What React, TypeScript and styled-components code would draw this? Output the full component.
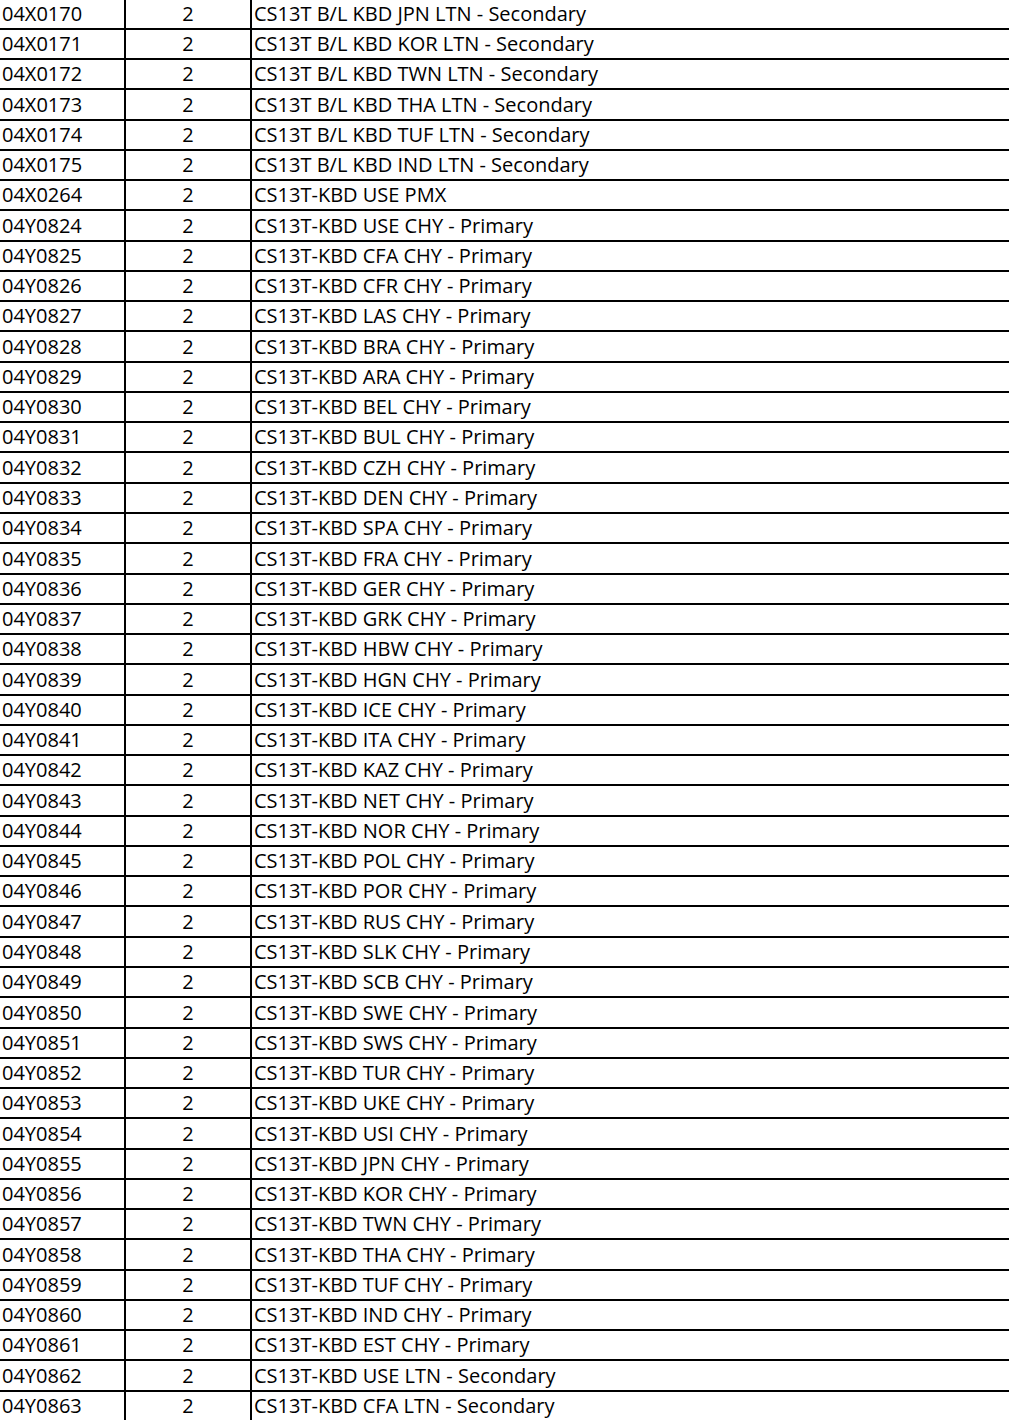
import React from "react";
import styled, { createGlobalStyle } from "styled-components";

const rows: [string, string][] = [
  ["04X0170", "CS13T B/L KBD JPN LTN - Secondary"],
  ["04X0171", "CS13T B/L KBD KOR LTN - Secondary"],
  ["04X0172", "CS13T B/L KBD TWN LTN - Secondary"],
  ["04X0173", "CS13T B/L KBD THA LTN - Secondary"],
  ["04X0174", "CS13T B/L KBD TUF LTN - Secondary"],
  ["04X0175", "CS13T B/L KBD IND LTN - Secondary"],
  ["04X0264", "CS13T-KBD USE PMX"],
  ["04Y0824", "CS13T-KBD USE CHY - Primary"],
  ["04Y0825", "CS13T-KBD CFA CHY - Primary"],
  ["04Y0826", "CS13T-KBD CFR CHY - Primary"],
  ["04Y0827", "CS13T-KBD LAS CHY - Primary"],
  ["04Y0828", "CS13T-KBD BRA CHY - Primary"],
  ["04Y0829", "CS13T-KBD ARA CHY - Primary"],
  ["04Y0830", "CS13T-KBD BEL CHY - Primary"],
  ["04Y0831", "CS13T-KBD BUL CHY - Primary"],
  ["04Y0832", "CS13T-KBD CZH CHY - Primary"],
  ["04Y0833", "CS13T-KBD DEN CHY - Primary"],
  ["04Y0834", "CS13T-KBD SPA CHY - Primary"],
  ["04Y0835", "CS13T-KBD FRA CHY - Primary"],
  ["04Y0836", "CS13T-KBD GER CHY - Primary"],
  ["04Y0837", "CS13T-KBD GRK CHY - Primary"],
  ["04Y0838", "CS13T-KBD HBW CHY - Primary"],
  ["04Y0839", "CS13T-KBD HGN CHY - Primary"],
  ["04Y0840", "CS13T-KBD ICE CHY - Primary"],
  ["04Y0841", "CS13T-KBD ITA CHY - Primary"],
  ["04Y0842", "CS13T-KBD KAZ CHY - Primary"],
  ["04Y0843", "CS13T-KBD NET CHY - Primary"],
  ["04Y0844", "CS13T-KBD NOR CHY - Primary"],
  ["04Y0845", "CS13T-KBD POL CHY - Primary"],
  ["04Y0846", "CS13T-KBD POR CHY - Primary"],
  ["04Y0847", "CS13T-KBD RUS CHY - Primary"],
  ["04Y0848", "CS13T-KBD SLK CHY - Primary"],
  ["04Y0849", "CS13T-KBD SCB CHY - Primary"],
  ["04Y0850", "CS13T-KBD SWE CHY - Primary"],
  ["04Y0851", "CS13T-KBD SWS CHY - Primary"],
  ["04Y0852", "CS13T-KBD TUR CHY - Primary"],
  ["04Y0853", "CS13T-KBD UKE CHY - Primary"],
  ["04Y0854", "CS13T-KBD USI CHY - Primary"],
  ["04Y0855", "CS13T-KBD JPN CHY - Primary"],
  ["04Y0856", "CS13T-KBD KOR CHY - Primary"],
  ["04Y0857", "CS13T-KBD TWN CHY - Primary"],
  ["04Y0858", "CS13T-KBD THA CHY - Primary"],
  ["04Y0859", "CS13T-KBD TUF CHY - Primary"],
  ["04Y0860", "CS13T-KBD IND CHY - Primary"],
  ["04Y0861", "CS13T-KBD EST CHY - Primary"],
  ["04Y0862", "CS13T-KBD USE LTN - Secondary"],
  ["04Y0863", "CS13T-KBD CFA LTN - Secondary"],
];

const GlobalStyle = createGlobalStyle`
  html, body {
    margin: 0;
    padding: 0;
    background: #ffffff;
    overflow: hidden;
  }
`;

const Sheet = styled.div`
  width: 1009px;
  margin-top: -0.5px;
  font-family: "Open Sans", "Liberation Sans", sans-serif;
  font-size: 20px;
  color: #000;
`;

const Row = styled.div`
  display: grid;
  grid-template-columns: 126px 126px 1fr;
  height: 30.27px;
  box-sizing: border-box;
  border-bottom: 2px solid #000;
`;

const Cell = styled.div<{ $align?: "left" | "center"; $pad?: number; $last?: boolean }>`
  display: flex;
  align-items: flex-end;
  justify-content: ${(p) => (p.$align === "center" ? "center" : "flex-start")};
  padding-left: ${(p) => p.$pad ?? 0}px;
  padding-bottom: 1px;
  border-right: ${(p) => (p.$last ? "none" : "2px solid #000")};
  line-height: 27px;
  white-space: nowrap;
  overflow: hidden;
`;

export default function App() {
  return (
    <>
      <GlobalStyle />
      <Sheet>
        {rows.map(([code, desc]) => (
          <Row key={code}>
            <Cell $pad={2}>{code}</Cell>
            <Cell $align="center">2</Cell>
            <Cell $pad={2} $last>
              {desc}
            </Cell>
          </Row>
        ))}
      </Sheet>
    </>
  );
}
